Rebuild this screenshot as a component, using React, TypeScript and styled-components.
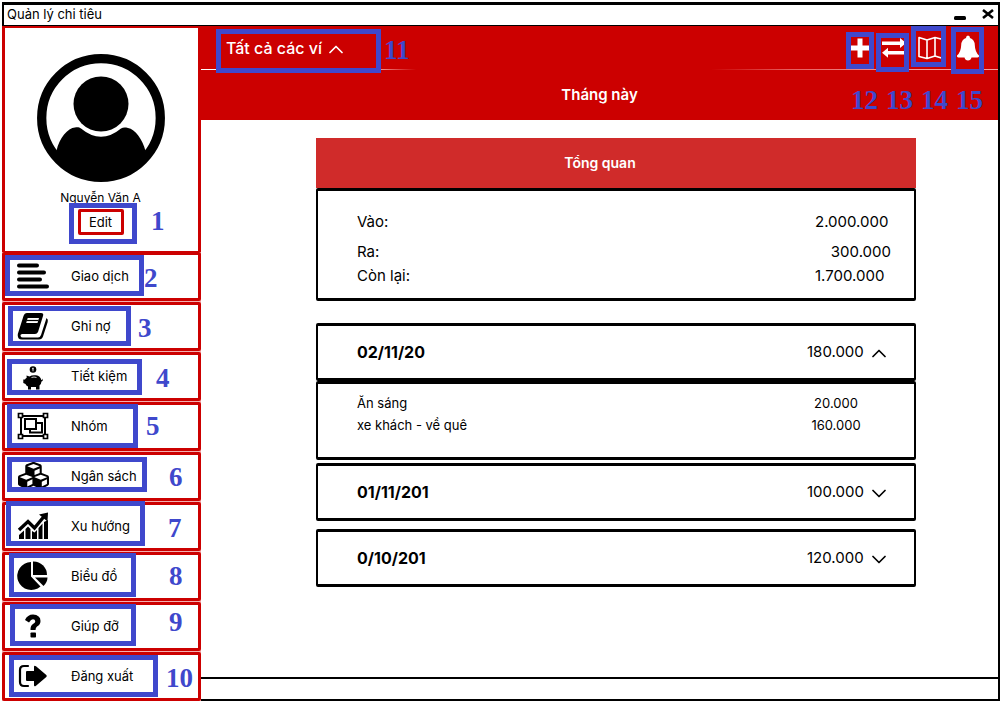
import React from 'react';
import styled, { createGlobalStyle } from 'styled-components';
import { FaCubes } from 'react-icons/fa';

const RED = '#cc0000';
const BLUE = '#3f48cc';

const Global = createGlobalStyle`
  *, *::before, *::after { box-sizing: border-box; }
  body { margin: 0; background: #fff; color: #000; font-family: Inter, "Noto Sans", sans-serif; font-size: 13px; }
  button { font: inherit; color: inherit; background: none; border: 0; padding: 0; cursor: pointer; }
  svg { display: block; }
`;

const Window = styled.div`
  min-height: 100vh;
  padding: 2px 1px 0 2px;
  display: flex;
  flex-direction: column;
`;

const TitleBar = styled.header`
  display: flex;
  align-items: center;
  justify-content: space-between;
  height: 24px;
  padding: 0 4px 2px 3px;
  border: 2px solid #000;
  border-top-width: 3px;
  border-bottom-width: 1px;
  line-height: 18px;
`;

const WindowButtons = styled.div`
  display: flex;
  gap: 16px;
`;

const Body = styled.div`
  flex: 1;
  display: grid;
  grid-template-columns: 199px minmax(0, 1fr);
`;

const Sidebar = styled.aside`
  display: flex;
  flex-direction: column;
`;

const Profile = styled.section`
  position: relative;
  display: flex;
  flex-direction: column;
  align-items: center;
  height: 226px;
  padding: 26px 2px 0 0;
  border: 3px solid ${RED};
  border-top-width: 2px;
  border-bottom-width: 1px;
`;

const UserName = styled.p`
  margin: 7px 0 2px;
  font-size: 12px;
  line-height: 18px;
`;

const EditButton = styled.button`
  width: 46px;
  height: 26px;
  border: 3px solid ${RED};
  border-radius: 2px;
  line-height: 18px;
`;

const Nav = styled.nav`
  flex: 1;
  display: flex;
  flex-direction: column;
  gap: 1px;
  background: #f4b0b0;
`;

const NavRow = styled.div`
  position: relative;
  height: 49px;
  background: #fff;
  border: 3px solid ${RED};
  border-radius: 2px;
`;

const NavLink = styled.a`
  display: flex;
  align-items: center;
  height: 100%;
  padding: 0 0 2px 11px;
  gap: 21px;
  color: inherit;
  text-decoration: none;
`;

const NavIcon = styled.span`
  display: flex;
  justify-content: center;
  width: 34px;
`;

const Mark = styled.span<{ $x: number; $y: number; $w: number; $h: number; $fromRight?: boolean }>`
  position: absolute;
  ${p => (p.$fromRight ? 'right' : 'left')}: ${p => p.$x}px;
  top: ${p => p.$y}px;
  width: ${p => p.$w}px;
  height: ${p => p.$h}px;
  border: 5px solid ${BLUE};
  pointer-events: none;
`;

const Num = styled.span<{ $x: number; $y: number; $fromRight?: boolean }>`
  position: absolute;
  ${p => (p.$fromRight ? 'right' : 'left')}: ${p => p.$x}px;
  top: ${p => p.$y}px;
  color: ${BLUE};
  font: bold 27px/26px "Liberation Serif", serif;
  pointer-events: none;
`;

const Main = styled.main`
  display: flex;
  flex-direction: column;
  border-right: 2px solid #000;
  border-bottom: 2px solid #000;
`;

const TopBar = styled.div`
  position: relative;
  background: ${RED};
  color: #fff;
`;

const Toolbar = styled.div`
  display: flex;
  align-items: center;
  justify-content: space-between;
  height: 44px;
  padding: 0 18px 0 25px;
  background: linear-gradient(90deg, #fff 2%, #f4a0a0 22%, ${RED} 27%, ${RED} 64%, #e86060 74%, #f4a0a0 90%) bottom / 100% 1px no-repeat;
`;

const WalletButton = styled.button`
  display: flex;
  align-items: center;
  gap: 7px;
  font-size: 16px;
  font-weight: 500;
  line-height: 20px;
`;

const Actions = styled.div`
  display: flex;
  align-items: center;
  gap: 12px;
`;

const Period = styled.h1`
  margin: 0;
  height: 50px;
  font-size: 15px;
  font-weight: 600;
  line-height: 50px;
  text-align: center;
`;

const Content = styled.div`
  flex: 1;
  padding: 18px 82px 0 115px;
`;

const OverviewTitle = styled.h2`
  margin: 0;
  padding-right: 32px;
  background: #d02b2a;
  color: #fff;
  font-size: 14px;
  font-weight: 600;
  line-height: 50px;
  text-align: center;
`;

const Card = styled.section`
  border: 2px solid #000;
  border-top-width: 3px;
  border-bottom-width: 3px;
  border-radius: 2px;
`;

const Summary = styled(Card)`
  height: 113px;
  margin-bottom: 22px;
  padding: 19px 23px 0 39px;
`;

const SummaryTable = styled.table`
  width: 100%;
  border-collapse: collapse;
  line-height: 24px;
  th { padding: 0; font-size: 15px; font-weight: 400; text-align: left; }
  td { padding: 0; width: 76px; font-size: 15px; }
  tr:first-child > * { padding-bottom: 6px; }
  tr:nth-child(2) > td { text-align: right; }
`;

const Day = styled(Card)`
  height: 58px;
  display: flex;
`;

const DayButton = styled.button`
  flex: 1;
  display: flex;
  align-items: center;
  padding: 0 28px 0 39px;
  line-height: 20px;
`;

const DayDate = styled.b`
  flex: 1;
  font-size: 16px;
  text-align: left;
`;

const DayAmount = styled.span`
  width: 65px;
  font-size: 15px;
  text-align: left;
`;

const Details = styled(Card)`
  height: 79px;
  margin-bottom: 3px;
  padding: 8px 53px 0 39px;
`;

const DetailTable = styled.table`
  width: 100%;
  border-collapse: collapse;
  line-height: 22px;
  td { padding: 0; }
  td:last-child { width: 50px; text-align: center; }
`;

const DayGap = styled.div`
  display: flex;
  flex-direction: column;
  gap: 8px;
`;

const StatusBar = styled.footer`
  height: 22px;
  border-top: 2px solid #000;
`;

const Chevron = ({ up = false }: { up?: boolean }) => (
  <svg width="14" height="12" viewBox="0 0 14 12" fill="none" stroke="currentColor" strokeWidth="1.700" strokeLinecap="round" strokeLinejoin="round">
    <path d={up ? 'M1 10.500 7 4.500 13 10.500' : 'M1 4.500 7 10.500 13 4.500'} />
  </svg>
);

const Avatar = () => (
  <svg width="128" height="128" viewBox="0 0 128 128" aria-hidden="true">
    <path d="M19.500 97 C22 84 31 74 38 73.500 C41 73 42.500 73.500 44 74.500 Q64 91 84 74.500 C86 73.500 87.500 73.200 91 74 C98 75 106 86 108.500 97 L98 112 64 124 30 112Z" />
    <circle cx="64" cy="50" r="27.500" />
    <circle cx="64" cy="64" r="59.300" fill="none" stroke="#000" strokeWidth="9.300" />
  </svg>
);

const Lines = () => (
  <svg width="34" height="26" viewBox="0 0 34 26" stroke="#000" strokeWidth="4" strokeLinecap="round">
    <path d="M3 2.500H21M3 9.500H28M3 16.500H24M3 23.500H31" />
  </svg>
);

const Book = () => (
  <svg width="32" height="28" viewBox="0 0 32 28">
    <path d="M10 1H24Q27 1 26 4L21 20Q20 22 18 22H5Q3 22.500 3.500 24Q4 25.500 6 25.500H21Q23 25.500 24 23L29.500 6Q31.500 7.500 30.700 10L26 24.500Q25 27.500 22 27.500H5Q0 27.500 .8 22L6.500 4Q7.500 1 10 1Z" />
    <path d="M10.700 6H22L20.500 11H9.200Z" fill="#fff" />
    <path d="M10 8.500H21.500" stroke="#000" strokeWidth="1.200" />
  </svg>
);

const Piggy = () => (
  <svg width="20" height="28" viewBox="0 -4 20 28">
    <circle cx="10" cy="3.500" r="3.300" />
    <path d="M10 1.700V5.300M9 2.700H10.700" stroke="#fff" strokeWidth=".8" />
    <path d="M3.500 9.500 6.500 10.500Q9 8.700 13 9.300Q17.500 10 18.300 14Q19.500 14 19.500 12.500Q20.500 15 18.500 15.500Q18.300 18 16.500 19.500V23.500H13V21H8V23.500H5V20.500Q3 19.500 2.500 18L.3 17V13.500H2Q2.500 12.300 3.700 11.700Z" />
    <path d="M8.500 11.500Q11 10.500 13.500 11.500" fill="none" stroke="#fff" strokeWidth=".8" />
  </svg>
);

const Group = () => (
  <svg width="32" height="28" viewBox="0 0 32 28" fill="#fff" stroke="#000" strokeWidth="2">
    <path d="M4 4H28V24H4Z" />
    <path d="M13 11H25V20.500H13Z" />
    <path d="M8 7H19V17H8Z" />
    <path d="M1.500 1.500H5.500V5.500H1.500ZM26.500 1.500H30.500V5.500H26.500ZM1.500 22.500H5.500V26.500H1.500ZM26.500 22.500H30.500V26.500H26.500Z" strokeWidth="1.700" />
  </svg>
);

const Trend = () => (
  <svg width="32" height="28" viewBox="0 0 32 28">
    <path d="M2 18 11 9.500 17.500 16 27 4.500" fill="none" stroke="#000" strokeWidth="3.400" />
    <path d="M22 2.500 31 .5 30.500 9.500Z" />
    <path d="M2 23 7 18.500V27H2ZM8.500 17 11 14.500 13.500 17V27H8.500ZM15 19 17.500 20.500 20 18V27H15ZM21.500 16 25.500 11.500V27H21.500ZM27 10 31 8V27H27Z" />
  </svg>
);

const Pie = () => (
  <svg width="32" height="30" viewBox="0 0 32 30">
    <path d="M14 15.500 23.500 25.500A14 14 0 1 1 14 1Z" />
    <path d="M16 .5A13.500 13.500 0 0 1 30 14H16Z" />
    <path d="M18 16.500H30.500Q30.500 21 26.500 25Z" />
  </svg>
);

const Question = () => (
  <svg width="18" height="24" viewBox="0 0 18 24">
    <path d="M1 6Q3.500 .5 9 .5Q16.500 1 16.500 7Q16.500 10.500 13 12.500Q11.500 13.500 11.500 16H6.500Q6.300 11.500 9 10Q11.300 8.800 11.300 7.200Q11 5.200 9 5.200Q7 5.200 5 8.500Z" />
    <rect x="6.500" y="18.500" width="5.500" height="5" rx=".8" />
  </svg>
);

const Exit = () => (
  <svg width="30" height="24" viewBox="0 0 30 24">
    <path d="M10 2H6Q2 2 2 6V18Q2 22 6 22H10" fill="none" stroke="#000" strokeWidth="2.200" strokeLinecap="round" />
    <path d="M8 8Q8 7 9 7H16V3Q16 .8 18 2.300L28.300 11Q29.300 12 28.300 13L18 21.700Q16 23.200 16 21V17H9Q8 17 8 16Z" />
  </svg>
);

const Plus = () => (
  <svg width="20" height="20" viewBox="0 0 20 20" fill="#fff">
    <path d="M7.500 .5H12.500V7.500H19V12.500H12.500V19.500H7.500V12.500H1V7.500H7.500Z" />
  </svg>
);

const Swap = () => (
  <svg width="24" height="20" viewBox="0 0 24 20" fill="#fff">
    <path d="M0 3.500H18V0L24 5 18 10V7H0ZM24 13H6V9.700L0 14.700 6 19.700V16.500H24Z" />
  </svg>
);

const MapIcon = () => (
  <svg width="26" height="24" viewBox="0 0 26 24" fill="none" stroke="#fff" strokeWidth="1.600" strokeLinejoin="round">
    <path d="M1 1.500 9 4 17 1.500 25 3.500V22.500L17 20 9 22.500 1 20.500ZM9 4V22.500M17 1.500V20" />
  </svg>
);

const Bell = () => (
  <svg width="24" height="26" viewBox="0 0 24 26" fill="#fff">
    <path d="M12 .5Q14 .5 14 3Q18.500 4.500 18.800 10Q19 17 23 20.500Q23.500 22.500 21.500 22.500H15.500Q14.800 25.500 12 25.500Q9.200 25.500 8.500 22.500H2.500Q.5 22.500 1 20.500Q5 17 5.200 10Q5.500 4.500 10 3Q10 .5 12 .5Z" />
  </svg>
);

const items = [
  { label: 'Giao dịch', icon: <Lines />, mark: [0, 0, 139, 41], num: [139, 10] },
  { label: 'Ghi nợ', icon: <Book />, mark: [3, 1, 123, 40], num: [133, 10] },
  { label: 'Tiết kiệm', icon: <Piggy />, mark: [2, 4, 135, 36], num: [151, 10] },
  { label: 'Nhóm', icon: <Group />, mark: [2, -1, 131, 44], num: [141, 8] },
  { label: 'Ngân sách', icon: <FaCubes size={31} />, mark: [2, 2, 140, 35], num: [164, 9] },
  { label: 'Xu hướng', icon: <Trend />, mark: [1, -4, 139, 45], num: [163, 10] },
  { label: 'Biểu đồ', icon: <Pie />, mark: [4, -2, 127, 44], num: [164, 8] },
  { label: 'Giúp đỡ', icon: <Question />, mark: [5, -1, 126, 42], num: [164, 4] },
  { label: 'Đăng xuất', icon: <Exit />, mark: [4, 0, 149, 42], num: [161, 10] },
];

const actions = [
  { label: 'Thêm', icon: <Plus />, mark: [124, 6, 28, 37] },
  { label: 'Chuyển', icon: <Swap />, mark: [89, 7, 33, 39] },
  { label: 'Bản đồ', icon: <MapIcon />, mark: [52, 0, 35, 41] },
  { label: 'Thông báo', icon: <Bell />, mark: [14, 1, 33, 47] },
];

export default function App() {
  return (
    <Window>
      <Global />
      <TitleBar>
        <span>Quản lý chi tiêu</span>
        <WindowButtons>
          <button aria-label="Thu nhỏ">
            <svg width="12" height="12" viewBox="0 0 12 12"><rect y="8" width="12" height="4" rx="1.500" /></svg>
          </button>
          <button aria-label="Đóng">
            <svg width="12" height="12" viewBox="0 0 12 12" stroke="#000" strokeWidth="2.600"><path d="M1 2 11 10M11 2 1 10" /></svg>
          </button>
        </WindowButtons>
      </TitleBar>
      <Body>
        <Sidebar>
          <Profile>
            <Avatar />
            <UserName>Nguyễn Văn A</UserName>
            <EditButton>Edit</EditButton>
            <Mark $x={64} $y={175} $w={68} $h={41} />
            <Num $x={146} $y={180}>1</Num>
          </Profile>
          <Nav>
            {items.map((it, i) => (
              <NavRow key={it.label}>
                <NavLink href="#">
                  <NavIcon>{it.icon}</NavIcon>
                  {it.label}
                </NavLink>
                <Mark $x={it.mark[0]} $y={it.mark[1]} $w={it.mark[2]} $h={it.mark[3]} />
                <Num $x={it.num[0]} $y={it.num[1]}>{i + 2}</Num>
              </NavRow>
            ))}
          </Nav>
        </Sidebar>
        <Main>
          <TopBar>
            <Toolbar>
              <WalletButton>Tất cả các ví <Chevron up /></WalletButton>
              <Actions>
                {actions.map(a => (
                  <button key={a.label} aria-label={a.label}>{a.icon}</button>
                ))}
              </Actions>
            </Toolbar>
            <Period>Tháng này</Period>
            <Mark $x={15} $y={3} $w={165} $h={44} />
            <Num $x={183} $y={11}>11</Num>
            {actions.map((a, i) => (
              <React.Fragment key={a.label}>
                <Mark $fromRight $x={a.mark[0]} $y={a.mark[1]} $w={a.mark[2]} $h={a.mark[3]} />
                <Num $fromRight $x={120 - i * 35} $y={61}>{12 + i}</Num>
              </React.Fragment>
            ))}
          </TopBar>
          <Content>
            <OverviewTitle>Tổng quan</OverviewTitle>
            <Summary>
              <SummaryTable>
                <tbody>
                  <tr><th scope="row">Vào:</th><td>2.000.000</td></tr>
                  <tr><th scope="row">Ra:</th><td>300.000</td></tr>
                  <tr><th scope="row">Còn lại:</th><td>1.700.000</td></tr>
                </tbody>
              </SummaryTable>
            </Summary>
            <Day>
              <DayButton aria-expanded="true">
                <DayDate>02/11/20</DayDate><DayAmount>180.000</DayAmount><Chevron up />
              </DayButton>
            </Day>
            <Details>
              <DetailTable>
                <tbody>
                  <tr><td>Ăn sáng</td><td>20.000</td></tr>
                  <tr><td>xe khách - về quê</td><td>160.000</td></tr>
                </tbody>
              </DetailTable>
            </Details>
            <DayGap>
              <Day>
                <DayButton aria-expanded="false">
                  <DayDate>01/11/201</DayDate><DayAmount>100.000</DayAmount><Chevron />
                </DayButton>
              </Day>
              <Day>
                <DayButton aria-expanded="false">
                  <DayDate>0/10/201</DayDate><DayAmount>120.000</DayAmount><Chevron />
                </DayButton>
              </Day>
            </DayGap>
          </Content>
          <StatusBar />
        </Main>
      </Body>
    </Window>
  );
}
